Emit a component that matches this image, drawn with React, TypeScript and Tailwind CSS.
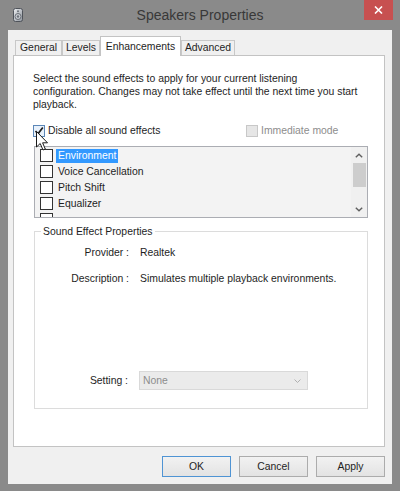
import React from "react";

function Box() {
  return <div className="w-[13px] h-[13px] border border-[#333333] bg-white shrink-0" />;
}

function Tab({ label, w, active = false }: { label: string; w: string; active?: boolean }) {
  if (active) {
    return (
      <div
        className={`${w} h-[20px] -mb-px z-10 bg-white border border-b-0 border-[#c3c3c3] flex items-start justify-center pt-[2px] text-[#1e1e1e]`}
      >
        {label}
      </div>
    );
  }
  return (
    <div
      className={`${w} h-[15px] bg-[#f0f0f0] border border-b-0 border-[#c8c8c8] flex items-center justify-center text-[#1e1e1e] leading-none`}
    >
      {label}
    </div>
  );
}

function Button({ label, primary = false }: { label: string; primary?: boolean }) {
  return (
    <div
      className={`w-[69px] h-[21px] flex items-center justify-center bg-gradient-to-b from-[#f2f2f2] to-[#e3e3e3] border ${
        primary ? "border-[#4f94d4]" : "border-[#acacac]"
      } text-[#1e1e1e]`}
    >
      {label}
    </div>
  );
}

export default function App() {
  const items = ["Environment", "Voice Cancellation", "Pitch Shift", "Equalizer"];
  return (
    <div className="w-[400px] h-[491px] bg-[#8a8a8a] flex flex-col overflow-hidden relative font-['Liberation_Sans',Arial,sans-serif] text-[10.4px] text-[#1e1e1e]">
      {/* Title bar */}
      <div className="h-[30px] shrink-0 grid grid-cols-[80px_1fr_80px]">
        <div className="pl-[13px] pt-[8px]">
          <svg width="10" height="14" viewBox="0 0 10 14">
            <defs>
              <linearGradient id="spk" x1="0" y1="0" x2="1" y2="1">
                <stop offset="0" stopColor="#eef0f3" />
                <stop offset="1" stopColor="#8d939b" />
              </linearGradient>
            </defs>
            <rect x="0.5" y="0.5" width="9" height="13" rx="2" fill="url(#spk)" stroke="#4f535a" />
            <circle cx="5" cy="8.5" r="3" fill="#c9cdd3" stroke="#5f646c" strokeWidth="0.9" />
            <circle cx="5" cy="8.5" r="1.2" fill="#6d727a" />
            <circle cx="5" cy="3.3" r="1" fill="#6d727a" />
          </svg>
        </div>
        <div className="flex items-center justify-center text-[14px] text-[#383838] pt-[1px]">
          Speakers Properties
        </div>
        <div className="flex justify-end pr-[7px]">
          <div className="w-[29px] h-[20px] bg-[#c75050] flex items-center justify-center">
            <svg width="9" height="8" viewBox="0 0 9 8">
              <path d="M1 0.5 L8 7.5 M8 0.5 L1 7.5" stroke="#ffffff" strokeWidth="1.6" />
            </svg>
          </div>
        </div>
      </div>

      {/* Body */}
      <div className="mx-[8px] h-[454px] bg-[#f0f0f0] flex flex-col">
        {/* Tabs */}
        <div className="flex items-end ml-[7px] mt-[6px] h-[19px]">
          <Tab label="General" w="w-[47px]" />
          <Tab label="Levels" w="w-[38px]" />
          <Tab label="Enhancements" w="w-[81px]" active />
          <Tab label="Advanced" w="w-[54px]" />
        </div>

        {/* Panel */}
        <div className="ml-[5px] w-[372px] h-[392px] bg-white border border-[#c3c3c3] flex flex-col pl-[19px] pt-[16px]">
          <p className="leading-[13px] w-[345px]">
            Select the sound effects to apply for your current listening
            <br />
            configuration. Changes may not take effect until the next time you start
            <br />
            playback.
          </p>

          {/* checkbox row */}
          <div className="mt-[12px] h-[14px] grid grid-cols-[213px_auto] items-center">
            <div className="flex items-center gap-[3px]">
              <div className="w-[12px] h-[12px] border border-[#5b87b8] bg-[#e8f1fb] flex items-center justify-center">
                <svg width="10" height="10" viewBox="0 0 10 10">
                  <path d="M1.5 5 L4 7.8 L8.8 1.5" fill="none" stroke="#1f1f1f" strokeWidth="1.7" />
                </svg>
              </div>
              <span>Disable all sound effects</span>
            </div>
            <div className="flex items-center gap-[3px] text-[#8d8d8d]">
              <div className="w-[12px] h-[12px] border border-[#c8c8c8] bg-[#e6e6e6]" />
              <span>Immediate mode</span>
            </div>
          </div>

          {/* List box */}
          <div className="mt-[9px] ml-[1px] w-[334px] h-[72px] border border-[#abadb3] bg-[#f3f3f3] flex overflow-hidden">
            <div className="flex-1 flex flex-col pt-[2px] pl-[5px] gap-[3px]">
              {items.map((it, i) => (
                <div key={it} className="h-[13px] flex items-center gap-[3px] shrink-0">
                  <Box />
                  <span
                    className={
                      i === 0
                        ? "bg-[#3399ff] text-white px-[2px] h-[14px] flex items-center"
                        : "px-[2px]"
                    }
                  >
                    {it}
                  </span>
                </div>
              ))}
              <div className="h-[13px] flex items-center shrink-0">
                <Box />
              </div>
            </div>
            <div className="w-[16px] bg-[#f0f0f0] flex flex-col items-center">
              <div className="h-[16px] flex items-center justify-center">
                <svg width="8" height="5" viewBox="0 0 8 5">
                  <path d="M0.8 4.3 L4 1.2 L7.2 4.3" fill="none" stroke="#606060" strokeWidth="1.4" />
                </svg>
              </div>
              <div className="w-[13px] h-[24px] bg-[#cdcdcd]" />
              <div className="flex-1" />
              <div className="h-[16px] flex items-center justify-center">
                <svg width="8" height="5" viewBox="0 0 8 5">
                  <path d="M0.8 0.7 L4 3.8 L7.2 0.7" fill="none" stroke="#606060" strokeWidth="1.4" />
                </svg>
              </div>
            </div>
          </div>

          {/* Group box */}
          <div className="mt-[13px] ml-[1px] w-[334px] h-[178px] border border-[#dcdcdc] relative flex flex-col pt-[14px] pb-[18px]">
            <span className="absolute -top-[7px] left-[6px] bg-white px-[2px] leading-[13px]">
              Sound Effect Properties
            </span>
            <div className="flex leading-[13px]">
              <span className="w-[94px] text-right">Provider :</span>
              <span className="ml-[11px]">Realtek</span>
            </div>
            <div className="flex leading-[13px] mt-[13px]">
              <span className="w-[94px] text-right">Description :</span>
              <span className="ml-[11px]">Simulates multiple playback environments.</span>
            </div>
            <div className="flex-1" />
            <div className="flex items-center">
              <span className="w-[93px] text-right text-[#1e1e1e]">Setting :</span>
              <div className="ml-[11px] w-[169px] h-[19px] bg-[#ebebeb] border border-[#d9d9d9] flex items-center pl-[3px] pr-[6px] text-[#8d8d8d]">
                <span className="flex-1">None</span>
                <svg width="7" height="4" viewBox="0 0 7 4">
                  <path d="M0.5 0.5 L3.5 3.5 L6.5 0.5" fill="none" stroke="#b0b0b0" strokeWidth="1" />
                </svg>
              </div>
            </div>
          </div>
        </div>

        {/* Buttons */}
        <div className="mt-[9px] mr-[7px] flex justify-end gap-[8px]">
          <Button label="OK" primary />
          <Button label="Cancel" />
          <Button label="Apply" />
        </div>
      </div>

      {/* Mouse cursor overlay */}
      <svg className="absolute left-[36px] top-[131px]" width="13" height="20" viewBox="0 0 13 20">
        <path
          d="M0.5 0.5 L0.5 16 L4.2 12.5 L7 19 L9.3 18 L6.6 11.8 L11.5 11.8 Z"
          fill="#ffffff"
          stroke="#1a1a1a"
          strokeWidth="1"
          strokeLinejoin="round"
        />
      </svg>
    </div>
  );
}
